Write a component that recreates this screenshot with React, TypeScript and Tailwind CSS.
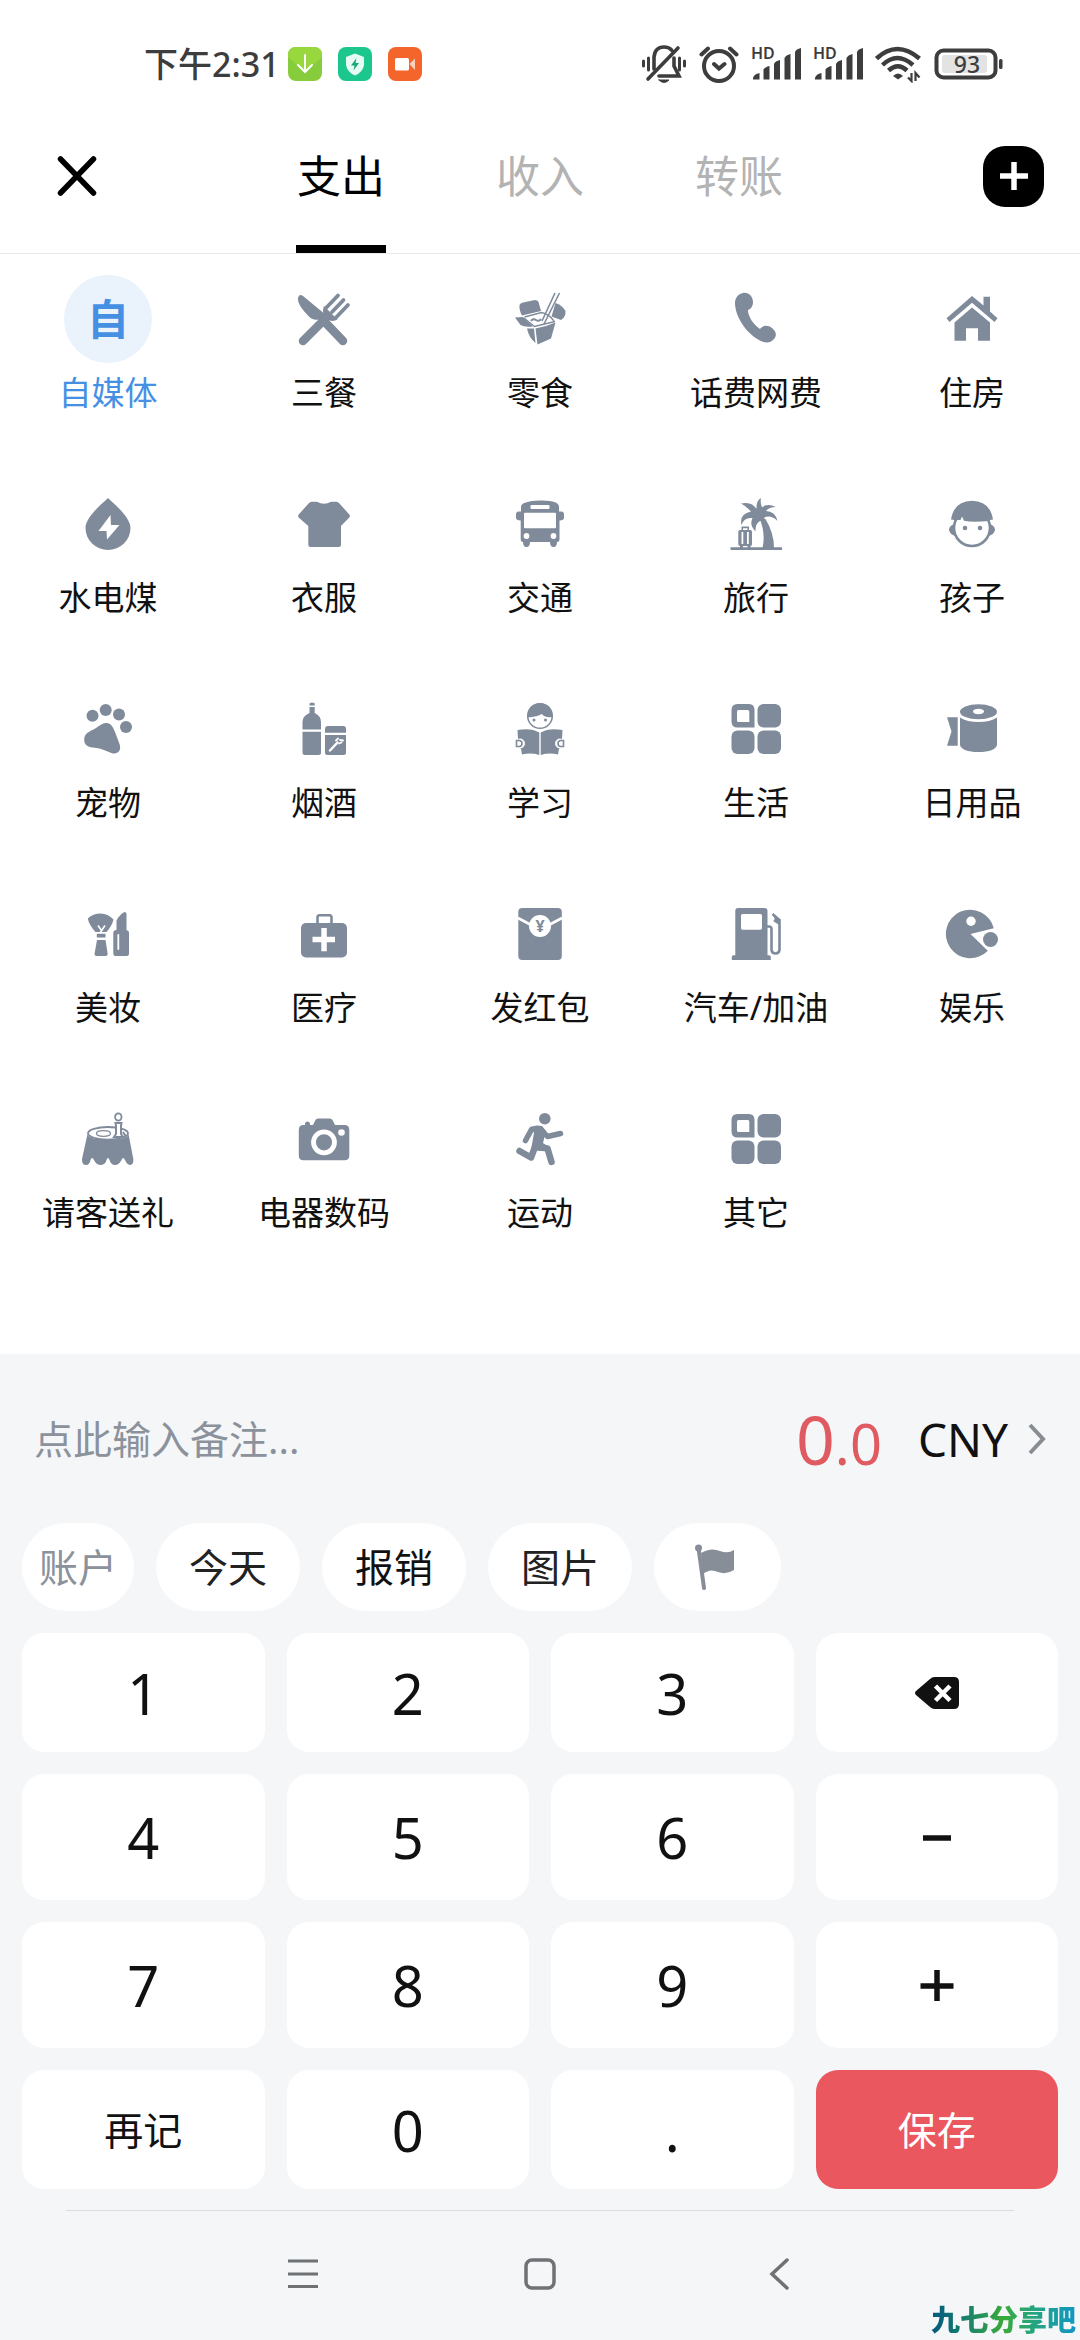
import React, { useState } from 'react';

const TABS = ['支出', '收入', '转账'];

const Icon: React.FC<{ children: React.ReactNode }> = ({ children }) => (
    <svg viewBox="0 0 54 54" className="w-[54px] h-[54px]" fill="currentColor" aria-hidden="true">{children}</svg>
);

const MealIcon = () => (
    <Icon>
        <path d="M1 6Q2 1.500 6 4L29 23L24 29L21 27.500Q17 28.500 13.500 26Q0 13 1 6Z" />
        <path d="M27 14L40.500 27.500Q36 30 32 28L27 23Q25 19 27 14Z" />
        <g stroke="currentColor" strokeLinecap="round" fill="none">
            <path d="M25 27L46 49M30 25L6 49" strokeWidth="8.500" />
            <path d="M41 3.500L29 16M46.500 8L35 20M51 13L39 25.500" strokeWidth="3.800" />
        </g>
    </Icon>
);

const SnackIcon = () => (
    <Icon>
        <path d="M6.500 13Q7 11 10 10.500L22 8Q24.500 8 25.500 10L28 19L9 23.500Q6 18 6.500 13Z" />
        <path d="M2 25.500L10 25L20 34.500Q11 35.500 7.500 33Z" />
        <path d="M14 36.500L21 36.500L22.500 51Q16 46 14 36.500Z" />
        <path d="M22.500 36.500L33 34L42.500 30.500L38 46.500L24.500 52.500Z" />
        <path d="M42.500 11Q49 13 52.500 19Q53 25 48 28L38.500 24.500Z" />
        <g stroke="currentColor" fill="none">
            <path d="M11.500 25L28.500 20.500Q36 22 41 29" strokeWidth="1.300" />
            <path d="M11 26L21.500 34.500L42 29.500" strokeWidth="1.300" />
            <path d="M18 29Q20 26 23 28T28 27" strokeWidth="2" />
            <path d="M46.500 1L30.500 33M42 1L29 29" strokeWidth="1.600" />
        </g>
    </Icon>
);

const PhoneIcon = () => (
    <Icon>
        <path d="M14 1C20 0 24 5 24 10C24 14 22 17 19 18C19 25 25 33 31 37C34 33 39 33 43 36C48 40 47.500 44 45 47C41 52 35 51 30 48C17 41 6 24 6 11C6 6 9 2 14 1Z" />
    </Icon>
);

const HouseIcon = () => (
    <Icon>
        <path d="M27 4L38.500 13.500V4.700H45V19.500L52.500 26.300L49.500 30L27 10.700L4.500 30L1.500 26.300Z" />
        <path d="M27 15.500L45 30.500V48.700H33V36.300H21V48.700H9.500V30.500Z" />
    </Icon>
);

const UtilityIcon = () => (
    <Icon>
        <path d="M27 1C22 6 4.500 20 4.500 31A22.500 22 0 0 0 49.500 31C49.500 20 32 6 27 1Z" />
        <path fill="#fff" d="M29.500 18L17.500 34H25.500L26 42.500L38.500 28H30Z" />
    </Icon>
);

const ClothesIcon = () => (
    <Icon>
        <path d="M14.500 4.700H20Q27 9 34 4.700H39.500Q41 5 42 6L52.300 17.500Q53.500 19 52.300 20.500L44 29V47.500Q44 50 41.500 50H14Q11.300 50 11.300 47.500V29L1.700 20.500Q.5 19 1.700 17.500L12 6Q13 5 14.500 4.700Z" />
    </Icon>
);

const BusIcon = () => (
    <Icon>
        <path d="M8 10Q8 4 27 3.500T46 10V14.500H49Q51 15 51 17V21Q50.500 23.500 46.500 23.500V42Q46.500 45 44 45Q44 50 40.500 50T37 45H17Q17 50 13.500 50T10 45Q7.700 45 7.700 42V23.500Q3.500 23.500 3 21V17Q3 15 5 14.500H8Z" />
        <g fill="#fff">
            <rect x="17.500" y="8" width="19" height="4" rx="1" />
            <rect x="11" y="15.700" width="32" height="15.500" rx="1" />
            <circle cx="13.500" cy="39" r="2.900" />
            <circle cx="40.500" cy="39" r="2.900" />
        </g>
    </Icon>
);

const TravelIcon = () => (
    <Icon>
        <path d="M1.500 50.300H53V53H1.500Z" />
        <path d="M30 20L36.500 22Q45 36 45 51H33.500Q37 36 30 20Z" />
        <path d="M27.500 12Q27 4 32 1Q31 6 33 10.500Q38 6 47 10Q40 10 37 14Q46 14 48.500 24Q43 18 36 20Q34 24 31 24Q26 27 26.500 34.500Q20 28 23.500 21Q15 20 12.500 28Q10 17 22 14.500Q17 9 12 6.500Q23 4 27.500 12Z" />
        <path fillRule="evenodd" d="M12.500 33V29.500H20V33H21.500Q23 33 23 35V47Q23 49 21.500 49V51.500H18.500V49H14V51.500H11V49Q9.300 49 9.300 47V35Q9.300 33 11 33ZM14 33H18.500V31.200H14ZM12.500 35V47H14.300V35ZM18 35V47H19.800V35Z" />
    </Icon>
);

const KidIcon = () => (
    <Icon>
        <circle cx="27" cy="31" r="18" fill="none" stroke="currentColor" strokeWidth="2.600" />
        <path d="M6 22.500Q9 4 27 3.700Q45 4 48 22.500L45 23Q44 27 44 24Q27 25.500 19 23.700L17 19.500L15.500 23L9.500 23Z" />
        <circle cx="20" cy="31" r="2.300" />
        <circle cx="35" cy="31" r="2.300" />
        <path d="M9 27Q4 29 4 33Q5 38 11 39ZM45 27Q50 29 50 33Q49 38 43 39Z" />
    </Icon>
);

const PetIcon = () => (
    <Icon>
        <circle cx="11.500" cy="13.700" r="6" />
        <circle cx="24.700" cy="8" r="6" />
        <circle cx="38" cy="12.500" r="6" />
        <circle cx="45" cy="25" r="6" />
        <path d="M25.500 21C30 21 32 25 34 30L38.500 42C41 49 36 53 30.500 51C25 49 22 46.500 12 45.500C5 45 3 41 3.200 37.500C3.500 31 8 30 15 26C19 23 22 21 25.500 21Z" />
    </Icon>
);

const DrinkIcon = () => (
    <Icon>
        <path d="M12.500 3.500V2Q12.500.7 14 .7H16.500Q17.700.7 17.700 2V3.500ZM12.500 5H17.700V11Q24 14 24 20V27.500H5.500V20Q5.500 14 12.500 11ZM5.500 29.700H24V50.500Q24 53 21.500 53H8Q5.500 53 5.500 50.500Z" />
        <path d="M28 30.700V27Q28 24 31 24H46.500Q49 24 49 27V30.700ZM28 33H49V50.500Q49 53 46.500 53H30.500Q28 53 28 50.500Z" />
        <path d="M33 48.500L40.500 40.500" stroke="#fff" strokeWidth="2.500" strokeLinecap="round" />
        <path d="M39 38.500L41 36.500M42 41.500L44.500 40.500M43 38L46 38.500" stroke="#fff" strokeWidth="1.800" strokeLinecap="round" />
    </Icon>
);

const StudyIcon = () => (
    <Icon>
        <circle cx="27" cy="14" r="12.300" fill="none" stroke="currentColor" strokeWidth="1.500" />
        <path d="M14.500 15Q15 1.500 27 1.200Q39 1.500 39.500 15Q32 16 29 12Q22 16 14.500 15Z" />
        <circle cx="21" cy="18" r="1.500" />
        <circle cx="32.500" cy="18" r="1.500" />
        <path d="M4.500 28Q18 25.500 26.300 30.500V53Q18 50.500 9 52.500L8 47L5.500 45ZM49.500 28Q36 25.500 27.700 30.500V53Q36 50.500 45 52.500L46 47L48.500 45Z" />
        <g fill="#fff" stroke="#fff">
            <circle cx="7" cy="41.500" r="4.500" />
            <circle cx="47" cy="41.500" r="4.500" />
        </g>
        <path d="M3.500 38.500H6.500Q9 39 9 41.500T6.500 44.500H3.500ZM50.500 38.500H47.500Q45 39 45 41.500T47.500 44.500H50.500Z" fill="none" stroke="currentColor" strokeWidth="1.600" />
    </Icon>
);

const TilesIcon = () => (
    <Icon>
        <path fillRule="evenodd" d="M8.500 2H20Q25.500 2 25.500 8V25.500H8.500Q2.500 25.500 2.500 19.500V8Q2.500 2 8.500 2ZM9.500 8Q8 8 8 9.500V18.500Q8 20 9.500 20H20.300V9.500Q20.300 8 18.800 8Z" />
        <rect x="28.500" y="2" width="23.500" height="23.500" rx="6" />
        <rect x="2.500" y="28.500" width="23" height="23.500" rx="6" />
        <rect x="28.500" y="28.500" width="23.500" height="23.500" rx="6" />
    </Icon>
);

const RollIcon = () => (
    <Icon>
        <path fillRule="evenodd" d="M15 9.700A18.500 7.500 0 0 1 52 9.700A18.500 7.500 0 0 1 15 9.700ZM28 9.500A5.500 2.700 0 0 0 39 9.500A5.500 2.700 0 0 0 28 9.500Z" />
        <path d="M15 15.500Q22 20 33.500 20T52 15.500V43Q50 50 33.500 50T15 43Z" />
        <path d="M2 15.300H12.700V43.700H2L6.500 29.500Z" />
    </Icon>
);

const BeautyIcon = () => (
    <Icon>
        <path d="M6.800 11.500Q12 6.500 19.500 6.500T32.500 12.500Q31 19 25.500 25H14.500Q8 18 6.800 11.500ZM15.800 26.700H24.500V30.500H15.800ZM16 33H24.500L26.700 47Q26.500 49 24.500 49H15.500Q13.500 49 13.500 47Z" />
        <path d="M17 18.500L20.500 23.500M24 18.500L19 26" stroke="#fff" strokeWidth="1.600" />
        <path d="M35.500 23V13.500Q39 7 43.500 5Q45.500 5 45.500 7V23Q48 23.500 48 25.500V46.500Q48 49 45.500 49H34.500Q32.300 49 32.300 46.500V25.500Q32.500 23 35.500 23Z" />
        <path d="M37.300 28V42" stroke="#fff" strokeWidth="1.800" strokeLinecap="round" />
    </Icon>
);

const MedicalIcon = () => (
    <Icon>
        <path d="M20.500 18V10.500Q20.500 8.300 22.500 8.300H32.500Q34.500 8.300 34.500 10.500V18" fill="none" stroke="currentColor" strokeWidth="2.600" />
        <rect x="4" y="16" width="46" height="34.500" rx="5" />
        <path fill="#fff" d="M24.300 21H29.800V29.700H38V35.300H29.800V44.300H24.300V35.300H15.500V29.700H24.300Z" />
    </Icon>
);

const RedPacketIcon = () => (
    <Icon>
        <rect x="5.300" y="1" width="43.500" height="52" rx="4" />
        <path d="M5 11L20 19M49 11L34 19" stroke="#fff" strokeWidth="2.600" />
        <circle cx="27" cy="19" r="11" fill="#fff" />
        <text x="27" y="25" textAnchor="middle" fontSize="16" fontWeight="700" fontFamily="Noto Sans, sans-serif">¥</text>
    </Icon>
);

const FuelIcon = () => (
    <Icon>
        <path fillRule="evenodd" d="M9 1H35.500Q38.500 1 38.500 4V48.300H40Q41.800 48.300 41.800 50V53H2.800V50Q2.800 48.300 4.500 48.300H6.300V4Q6.300 1 9 1ZM13.500 7Q12 7 12 8.500V21Q12 22.700 13.500 22.700H31.500Q33 22.700 33 21V8.500Q33 7 31.500 7Z" />
        <path d="M38 19.500H40Q42.500 19.500 42.500 22V43Q43 46.500 46.500 46.500T50.500 43V13L43.500 7" fill="none" stroke="currentColor" strokeWidth="2.600" />
        <path d="M44 8.500Q47 13 44 14L49.500 17.500L51.500 12.500Z" />
    </Icon>
);

const FunIcon = () => (
    <Icon>
        <path d="M48.800 21.300L25.500 27L42.800 43.700A24.300 24.300 0 1 1 48.800 21.300Z" />
        <circle cx="26" cy="14.300" r="4.700" fill="#fff" />
        <circle cx="45.500" cy="32.500" r="9.500" fill="#fff" />
        <circle cx="45.500" cy="32.500" r="7.500" />
    </Icon>
);

const TreatIcon = () => (
    <Icon>
        <path d="M6.500 22L1 47Q.8 53 5 53Q8.500 53 9.500 48Q11 44 13 48Q15 53 20 53Q24.500 52.500 25.500 48Q27 44 28.500 48Q30 53 34 53Q38 53 40.500 48Q42 44 44 48Q46 53 49.500 53Q53 52 52.300 47L47.500 22Q47 27.500 27 27.500T6.500 22Z" />
        <ellipse cx="27" cy="21.300" rx="20" ry="6.300" fill="#fff" stroke="currentColor" strokeWidth="1.800" />
        <ellipse cx="22.500" cy="21.500" rx="7" ry="2.800" fill="none" stroke="currentColor" strokeWidth="1.300" />
        <path d="M34.500 11H40.500L40 14V22L42 25H33L35 22V14Z" fill="#fff" stroke="currentColor" strokeWidth="2" />
        <ellipse cx="37.300" cy="5" rx="3.200" ry="3.700" fill="#fff" stroke="currentColor" strokeWidth="1.800" />
        <path d="M42 20L44.500 24" stroke="currentColor" strokeWidth="2" />
    </Icon>
);

const CameraIcon = () => (
    <Icon>
        <path d="M8 13V11.500Q8.300 9.500 10.500 9.500T13 11.500V13H16L18.500 8Q19.300 6.500 21 6.500H33Q34.500 6.500 35.500 8L38 13H47.500Q52.300 13 52.300 18V43.500Q52.300 48.300 47.500 48.300H6.500Q1.800 48.300 1.800 43.500V18Q1.800 13 6.500 13Z" />
        <circle cx="27" cy="30.300" r="10.500" fill="none" stroke="#fff" strokeWidth="4.800" />
        <circle cx="44.500" cy="20.500" r="3.300" fill="#fff" />
    </Icon>
);

const SportIcon = () => (
    <Icon>
        <circle cx="31.800" cy="6.700" r="5.800" />
        <path d="M18 15Q22 12.500 29 14L33 19L30 31L33 33L29 39L18 38L21 21Z" />
        <g fill="none" stroke="currentColor" strokeLinecap="round" strokeLinejoin="round">
            <path d="M18.500 17.500L12.500 28.500M28 17.500L34.500 24.500L47.500 21.500" strokeWidth="5.500" />
            <path d="M25 35L34.500 36.500L38.500 50M22 35L18 45.500L6.500 39" strokeWidth="6.500" />
        </g>
    </Icon>
);

const categories = [
    { name: '自媒体', icon: null },
    { name: '三餐', icon: <MealIcon /> },
    { name: '零食', icon: <SnackIcon /> },
    { name: '话费网费', icon: <PhoneIcon /> },
    { name: '住房', icon: <HouseIcon /> },
    { name: '水电煤', icon: <UtilityIcon /> },
    { name: '衣服', icon: <ClothesIcon /> },
    { name: '交通', icon: <BusIcon /> },
    { name: '旅行', icon: <TravelIcon /> },
    { name: '孩子', icon: <KidIcon /> },
    { name: '宠物', icon: <PetIcon /> },
    { name: '烟酒', icon: <DrinkIcon /> },
    { name: '学习', icon: <StudyIcon /> },
    { name: '生活', icon: <TilesIcon /> },
    { name: '日用品', icon: <RollIcon /> },
    { name: '美妆', icon: <BeautyIcon /> },
    { name: '医疗', icon: <MedicalIcon /> },
    { name: '发红包', icon: <RedPacketIcon /> },
    { name: '汽车/加油', icon: <FuelIcon /> },
    { name: '娱乐', icon: <FunIcon /> },
    { name: '请客送礼', icon: <TreatIcon /> },
    { name: '电器数码', icon: <CameraIcon /> },
    { name: '运动', icon: <SportIcon /> },
    { name: '其它', icon: <TilesIcon /> },
];

const SignalIcon = () => (
    <svg viewBox="0 -8 50 50" className="w-[50px] h-[50px]" fill="#3d3d3d" aria-hidden="true">
        <text x="0" y="12" fontSize="16" fontWeight="600" fontFamily="Noto Sans, sans-serif">HD</text>
        <path d="M2 32.500V31Q3 27 8.500 26V32.500ZM12.500 32.500V22.500Q14 20 18.500 19V32.500ZM23 32.500V17Q24 14 29 13V32.500ZM33.500 32.500V11Q35 8 39.500 7V32.500ZM44 32.500V5Q45 2 50 1V32.500Z" />
    </svg>
);

const StatusBar = () => (
    <div className="h-32 pl-36 pr-[77px] flex items-center justify-between text-[#3d3d3d]">
        <div className="flex items-center gap-2">
            <span className="text-[34px] leading-10 font-medium">下午2:31</span>
            <div className="flex gap-4">
                <svg viewBox="0 0 34 34" className="w-[34px] h-[34px]" aria-hidden="true">
                    <rect width="34" height="34" rx="8" fill="#86cc3c" />
                    <path d="M0 10L17 25L34 10V8Q34 0 26 0H8Q0 0 0 8Z" fill="#98d73e" />
                    <path d="M17 8V25M10 18L17 25L24 18" fill="none" stroke="#fff" strokeWidth="2" strokeLinecap="round" />
                </svg>
                <svg viewBox="0 0 34 34" className="w-[34px] h-[34px]" aria-hidden="true">
                    <rect width="34" height="34" rx="8" fill="#1cc78d" />
                    <path d="M17 6.500L26 10V18Q25 25 17 28.500Q9 25 8 18V10Z" fill="#e6fbf3" />
                    <path d="M18.500 11L13 18.500H16.500L15.500 23.500L21 16H17.500Z" fill="#17a878" />
                </svg>
                <svg viewBox="0 0 34 34" className="w-[34px] h-[34px]" aria-hidden="true">
                    <rect width="34" height="34" rx="8" fill="#f3652b" />
                    <rect x="7" y="11" width="14" height="12.500" rx="1.500" fill="#fff" />
                    <path d="M21.500 17L27 11.500V23Z" fill="#fbd0bd" />
                </svg>
            </div>
        </div>
        <div className="flex items-center gap-3">
            <svg viewBox="0 0 46 40" className="w-[46px] h-[40px]" fill="none" stroke="#3d3d3d" strokeWidth="3" strokeLinecap="round" aria-hidden="true">
                <path d="M2.500 17V22M7.500 14V26M38.500 14V26M43.500 17V22" />
                <path d="M13 25V13Q14 3 23 3Q28 3 30.500 6M37 4L7 35M33 14V22L38 32H18" strokeWidth="3.600" />
                <path d="M18 36H28Q23 41 18 36Z" fill="#3d3d3d" strokeWidth="1" />
            </svg>
            <svg viewBox="0 0 40 40" className="w-[40px] h-[40px]" fill="none" stroke="#3d3d3d" strokeWidth="4" strokeLinecap="round" aria-hidden="true">
                <circle cx="20" cy="22" r="15" />
                <path d="M15 20L20 24.500L25.500 20M2.500 10.500L9 4.500M37.500 10.500L31 4.500" />
            </svg>
            <SignalIcon />
            <SignalIcon />
            <svg viewBox="0 0 46 38" className="w-[46px] h-[38px]" fill="none" stroke="#3d3d3d" strokeWidth="4.500" aria-hidden="true">
                <path d="M1.500 13.500Q22 -5.500 44.500 13.500M7.500 20Q22 6 38 20M13.500 25.500Q23 17 32 25.500" />
                <path d="M23 34.500L18 31Q23 26 28 31Z" fill="#3d3d3d" stroke="none" />
                <path d="M36.500 28V36L33 32.500M40.500 36V28L44.500 32.500" strokeWidth="2.200" />
            </svg>
            <svg viewBox="0 0 70 34" className="w-[70px] h-[34px]" aria-hidden="true">
                <rect x="3.500" y="3.500" width="59" height="27" rx="7" fill="none" stroke="#3d3d3d" strokeWidth="4" />
                <rect x="9" y="8" width="45" height="18" rx="3" fill="#e3e3e3" />
                <rect x="66" y="12" width="3.500" height="10" rx="1.500" fill="#3d3d3d" />
                <text x="34" y="25.500" textAnchor="middle" fontSize="23" fontWeight="500" fill="#3d3d3d" fontFamily="Noto Sans, sans-serif">93</text>
            </svg>
        </div>
    </div>
);

const BackspaceIcon = () => (
    <svg viewBox="0 0 44 32" className="w-[44px] h-[32px]" aria-hidden="true">
        <path d="M0 16Q0 15 1 14L15 2Q17 0 19.500 0H39Q44 0 44 5V27Q44 32 39 32H19.500Q17 32 15 30L1 18Q0 17 0 16Z" fill="#111" />
        <path d="M20.500 9L35 23.500M35 9L20.500 23.500" stroke="#fff" strokeWidth="4.500" />
    </svg>
);

const MinusIcon = () => (
    <svg viewBox="0 0 34 32" className="w-[34px] h-[32px]" aria-hidden="true">
        <path d="M3 17H31" stroke="#111" strokeWidth="5.500" />
    </svg>
);

const PlusIcon = () => (
    <svg viewBox="0 0 34 32" className="w-[34px] h-[32px]" aria-hidden="true">
        <path d="M.5 17H33.500M17 1V32" stroke="#111" strokeWidth="5.500" />
    </svg>
);

interface KeyDef {
    id: string;
    label?: string;
    icon?: React.ReactNode;
    className: string;
}

const keys: KeyDef[] = [
    { id: '1', className: 'h-[119px] bg-white text-[56px]' },
    { id: '2', className: 'h-[119px] bg-white text-[56px]' },
    { id: '3', className: 'h-[119px] bg-white text-[56px]' },
    { id: 'back', label: '删除', icon: <BackspaceIcon />, className: 'h-[119px] bg-white' },
    { id: '4', className: 'h-[126px] bg-white text-[56px]' },
    { id: '5', className: 'h-[126px] bg-white text-[56px]' },
    { id: '6', className: 'h-[126px] bg-white text-[56px]' },
    { id: 'minus', label: '减', icon: <MinusIcon />, className: 'h-[126px] bg-white' },
    { id: '7', className: 'h-[126px] bg-white text-[56px]' },
    { id: '8', className: 'h-[126px] bg-white text-[56px]' },
    { id: '9', className: 'h-[126px] bg-white text-[56px]' },
    { id: 'plus', label: '加', icon: <PlusIcon />, className: 'h-[126px] bg-white' },
    { id: '再记', className: 'h-[119px] bg-white text-[39px]' },
    { id: '0', className: 'h-[119px] bg-white text-[56px]' },
    { id: '.', className: 'h-[119px] bg-white text-[56px]' },
    { id: '保存', className: 'h-[119px] bg-[#eb575e] text-white text-[39px]' },
];

const App: React.FC = () => {
    const [tab, setTab] = useState('支出');
    const [selected, setSelected] = useState('自媒体');
    const [note, setNote] = useState('');
    const [amount, setAmount] = useState('');

    const handleKey = (id: string) => {
        if (/^[0-9.]$/.test(id)) setAmount(amount + id);
        if (id === 'back') setAmount(amount.slice(0, -1));
    };

    const [whole, fraction] = amount.split('.');

    return (
        <div className="relative min-h-screen flex flex-col bg-white text-[#111] font-['Noto_Sans','Noto_Sans_CJK_SC',sans-serif]">
            <StatusBar />

            <header className="grid grid-cols-[1fr_auto_1fr] border-b border-[#ebebeb]">
                <button aria-label="关闭" className="h-24 pl-[57px] justify-self-start">
                    <svg viewBox="0 0 40 40" className="w-10 h-10" fill="none" stroke="#000" strokeWidth="5.500" strokeLinecap="round" aria-hidden="true">
                        <path d="M3.500 3L36.500 37M36.500 3L3.500 37" />
                    </svg>
                </button>
                <nav className="flex">
                    {TABS.map(t => (
                        <button key={t} onClick={() => setTab(t)} className="w-[199px] flex flex-col items-center">
                            <span className={`text-[44px] leading-[96px] ${tab === t ? 'text-black' : 'text-[#b3b3b3]'}`}>{t}</span>
                            <span className={`mt-[21px] h-2 w-[90px] ${tab === t ? 'bg-black' : ''}`} />
                        </button>
                    ))}
                </nav>
                <div className="h-24 pr-9 flex items-center justify-end">
                    <button aria-label="添加" className="w-[61px] h-[61px] rounded-[22px] bg-black flex items-center justify-center">
                        <svg viewBox="0 0 28 28" className="w-7 h-7" stroke="#fff" strokeWidth="5.500" aria-hidden="true">
                            <path d="M0 14H28M14 0V28" />
                        </svg>
                    </button>
                </div>
            </header>

            <main className="grow grid grid-cols-5 content-start gap-y-[67px] pt-[21px] pb-[121px]">
                {categories.map(c => (
                    <button key={c.name} onClick={() => setSelected(c.name)} className={`flex flex-col items-center gap-[10px] ${selected === c.name ? 'text-[#4690e4]' : 'text-[#7f8a9a]'}`}>
                        <span className={`w-[88px] h-[88px] rounded-full flex items-center justify-center ${selected === c.name ? 'bg-[#eaf2fc]' : ''}`}>
                            {c.icon || <span className="text-[42px] leading-none font-bold">{c.name[0]}</span>}
                        </span>
                        <span className={`text-[33px] leading-10 whitespace-nowrap ${selected === c.name ? '' : 'text-[#111]'}`}>{c.name}</span>
                    </button>
                ))}
            </main>

            <section className="bg-[#f4f6f8] px-[22px]">
                <div className="h-[169px] pl-3 pr-3 flex items-center">
                    <input
                        type="text"
                        aria-label="备注"
                        placeholder="点此输入备注..."
                        value={note}
                        onChange={e => setNote(e.target.value)}
                        className="grow min-w-0 text-[39px] leading-[52px] outline-none placeholder:text-[#8b929b]"
                    />
                    <div className="text-[#e05a61] text-[68px] leading-none">
                        {whole || '0'}<span className="text-[56px] leading-none">.{fraction || '0'}</span>
                    </div>
                    <button className="ml-9 flex items-center gap-5 text-[46px] leading-none">
                        CNY
                        <svg viewBox="0 0 18 32" className="w-[18px] h-8" fill="none" stroke="#888d94" strokeWidth="4" aria-hidden="true">
                            <path d="M2 2L15 16L2 30" />
                        </svg>
                    </button>
                </div>

                <div className="flex gap-[22px] text-[39px] text-[#222]">
                    <button className="h-[88px] px-[17px] rounded-full bg-white text-[#8b929b]">账户</button>
                    <button className="h-[88px] px-[33px] rounded-full bg-white">今天</button>
                    <button className="h-[88px] px-[33px] rounded-full bg-white text-[#111]">报销</button>
                    <button className="h-[88px] px-[33px] rounded-full bg-white">图片</button>
                    <button aria-label="标记" className="h-[88px] px-[41px] rounded-full bg-white">
                        <svg viewBox="0 0 45 46" className="w-[45px] h-[46px]" fill="#878e98" aria-hidden="true">
                            <circle cx="3.500" cy="4" r="3.500" />
                            <path d="M3.500 4L9 44" stroke="#878e98" strokeWidth="4" strokeLinecap="round" />
                            <path d="M6 9Q16 3 25 7Q33 10 39 6V26Q31 31 23 28Q15 24 8 30Z" />
                        </svg>
                    </button>
                </div>

                <div className="mt-[22px] grid grid-cols-4 gap-[22px]">
                    {keys.map(k => (
                        <button key={k.id} aria-label={k.label} onClick={() => handleKey(k.id)} className={`rounded-[22px] flex items-center justify-center leading-none ${k.className}`}>
                            {k.icon || k.id}
                        </button>
                    ))}
                </div>

                <div className="mt-[21px] mx-[44px] border-t border-[#d9dce0]" />

                <div className="h-[129px] pb-1 flex items-center justify-center text-[#6f7275]">
                    <button aria-label="最近任务" className="w-[237px] flex justify-center">
                        <svg viewBox="0 0 32 32" className="w-8 h-8" fill="none" stroke="currentColor" strokeWidth="3" aria-hidden="true">
                            <path d="M1 3H31M1 16H31M1 28.500H31" />
                        </svg>
                    </button>
                    <button aria-label="主页" className="w-[237px] flex justify-center">
                        <svg viewBox="0 0 32 32" className="w-8 h-8" fill="none" stroke="currentColor" strokeWidth="3.500" aria-hidden="true">
                            <rect x="2" y="2" width="28" height="28" rx="6" />
                        </svg>
                    </button>
                    <button aria-label="返回" className="w-[237px] flex justify-center">
                        <svg viewBox="0 0 32 32" className="w-8 h-8" fill="none" stroke="currentColor" strokeWidth="3.500" strokeLinecap="round" aria-hidden="true">
                            <path d="M26 2L11 16L26 30" />
                        </svg>
                    </button>
                </div>
            </section>

            <div className="absolute right-1 bottom-0 text-[29px] leading-10 font-black text-transparent bg-clip-text bg-linear-to-r from-[#07577f] via-[#3aaa35] to-[#1296c4]">九七分享吧</div>
        </div>
    );
};

export default App;
